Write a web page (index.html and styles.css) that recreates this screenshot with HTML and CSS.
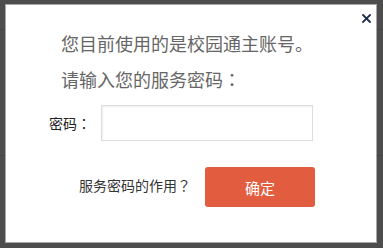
FILE: index.html
```html
<!DOCTYPE html>
<html lang="zh-CN">
<head>
<meta charset="utf-8">
<link rel="stylesheet" href="styles.css">
</head>
<body>
<div class="backdrop">
  <div class="bg-line bg-line-top"></div>
  <div class="bg-line bg-line-mid"></div>
  <div class="modal">
    <button class="close" aria-label="关闭">
      <svg width="9" height="9" viewBox="0 0 9 9"><path d="M1 1 L8 8 M8 1 L1 8" stroke="#1e2a4a" stroke-width="1.8" stroke-linecap="square"/></svg>
    </button>
    <p class="msg">您目前使用的是校园通主账号。</p>
    <p class="msg">请输入您的服务密码<span class="punct" lang="zh-TW">：</span></p>
    <div class="field">
      <label class="label">密码<span class="punct" lang="zh-TW">：</span></label>
      <input class="input" type="password">
    </div>
    <div class="actions">
      <span class="help">服务密码的作用<span class="punct" lang="zh-TW">？</span></span>
      <button class="ok">确定</button>
    </div>
  </div>
</div>
</body>
</html>
```
FILE: styles.css
```css
* { box-sizing: border-box; }
html, body { margin: 0; padding: 0; }
body {
  width: 383px;
  height: 248px;
  overflow: hidden;
  background: #4d4d4d;
  font-family: "Noto Sans CJK SC", "Noto Sans", sans-serif;
}
.backdrop {
  position: relative;
  width: 383px;
  height: 248px;
  padding: 4px 0 0 5px;
}
.bg-line {
  position: absolute;
  left: 0;
  right: 0;
  height: 1px;
  background: #444;
}
.bg-line-top { top: 29px; }
.bg-line-mid { top: 155px; }
.modal {
  position: relative;
  width: 372px;
  height: 239px;
  background: #fff;
  border: 1px solid #a8a8a8;
  padding: 20px 0 0 0;
}
.close {
  position: absolute;
  top: 8px;
  right: 4px;
  width: 11px;
  height: 11px;
  padding: 1px;
  border: 0;
  background: transparent;
  display: flex;
  align-items: center;
  justify-content: center;
}
.punct {
  font-family: "Noto Sans CJK TC", "Noto Sans CJK SC", sans-serif;
}
.msg {
  margin: 0;
  padding-left: 55px;
  font-size: 18px;
  line-height: 36px;
  color: #666;
}
.field {
  display: flex;
  align-items: center;
  margin-top: 8px;
  padding-left: 43px;
}
.label {
  width: 52px;
  font-size: 14px;
  color: #222;
}
.input {
  width: 212px;
  height: 36px;
  border: 1px solid #ddd;
  box-shadow: inset 1px 1px 2px #eee;
  background: #fff;
  outline: none;
}
.actions {
  display: flex;
  align-items: center;
  margin-top: 26px;
  padding-left: 73px;
}
.help {
  font-size: 14px;
  color: #333;
  margin-right: 14px;
  margin-top: -4px;
}
.ok {
  width: 110px;
  height: 40px;
  border: 0;
  border-radius: 3px;
  background: #e25c40;
  color: #fff;
  font-family: "Noto Sans CJK SC", sans-serif;
  font-size: 15px;
  padding: 0;
}
```
